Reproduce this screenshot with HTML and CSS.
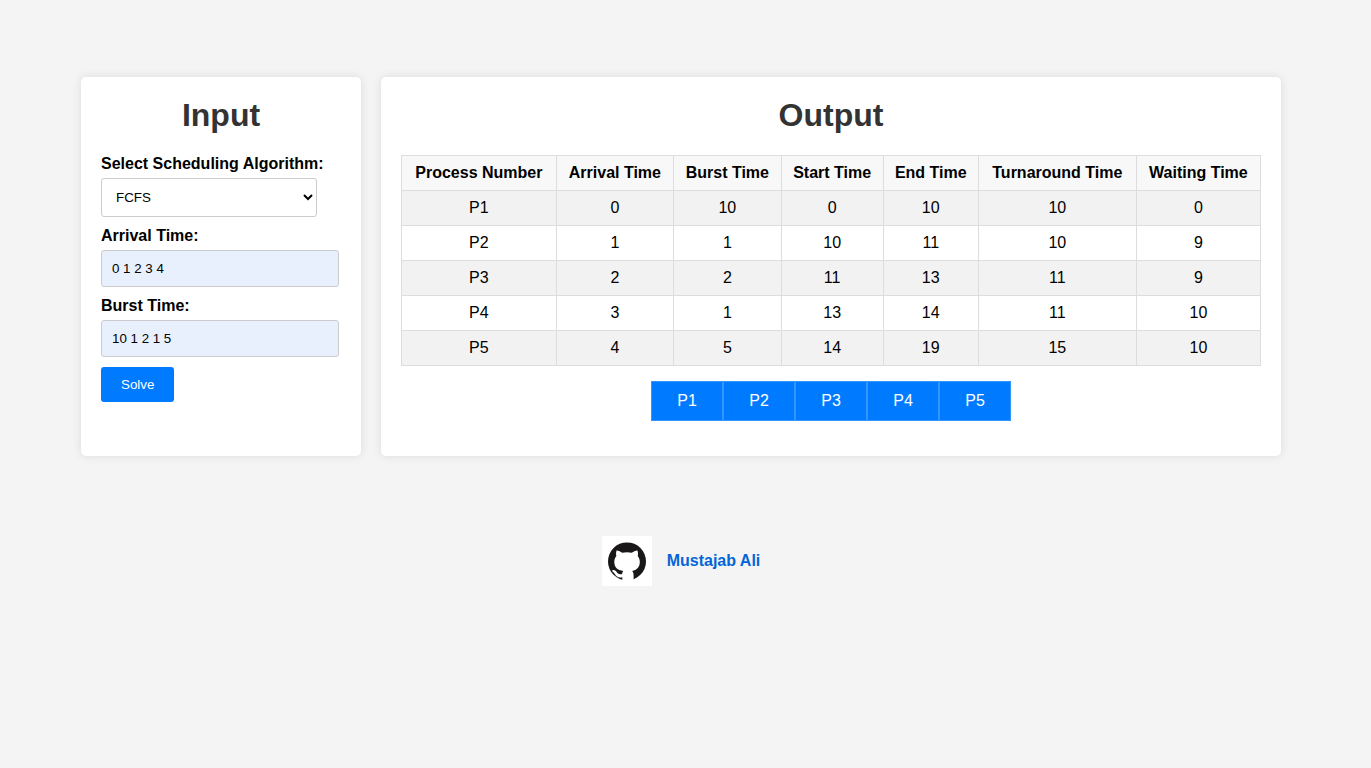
FILE: index.html
```html
<!DOCTYPE html>
<html lang="en">
<head>
<meta charset="utf-8">
<meta name="viewport" content="width=device-width, initial-scale=1">
<title>CPU Scheduling Solver</title>
<link rel="stylesheet" href="styles.css">
</head>
<body>
<main class="container">
  <section class="card">
    <h1 class="card-title">Input</h1>
    <form class="input-form">
      <label class="field-label" for="algorithm">Select Scheduling Algorithm:</label>
      <select class="field-select" id="algorithm">
        <option selected>FCFS</option>
        <option>SJF</option>
        <option>SRTF</option>
        <option>Round Robin</option>
      </select>
      <label class="field-label" for="arrival">Arrival Time:</label>
      <input class="field-input" id="arrival" type="text" value="0 1 2 3 4">
      <label class="field-label" for="burst">Burst Time:</label>
      <input class="field-input" id="burst" type="text" value="10 1 2 1 5">
      <button class="solve-button" type="button">Solve</button>
    </form>
  </section>
  <section class="card">
    <h1 class="card-title">Output</h1>
    <table class="results">
      <thead>
        <tr><th>Process Number</th><th>Arrival Time</th><th>Burst Time</th><th>Start Time</th><th>End Time</th><th>Turnaround Time</th><th>Waiting Time</th></tr>
      </thead>
      <tbody>
        <tr><td>P1</td><td>0</td><td>10</td><td>0</td><td>10</td><td>10</td><td>0</td></tr>
        <tr><td>P2</td><td>1</td><td>1</td><td>10</td><td>11</td><td>10</td><td>9</td></tr>
        <tr><td>P3</td><td>2</td><td>2</td><td>11</td><td>13</td><td>11</td><td>9</td></tr>
        <tr><td>P4</td><td>3</td><td>1</td><td>13</td><td>14</td><td>11</td><td>10</td></tr>
        <tr><td>P5</td><td>4</td><td>5</td><td>14</td><td>19</td><td>15</td><td>10</td></tr>
      </tbody>
    </table>
    <div class="gantt">
      <div class="gantt-block">P1</div>
      <div class="gantt-block">P2</div>
      <div class="gantt-block">P3</div>
      <div class="gantt-block">P4</div>
      <div class="gantt-block">P5</div>
    </div>
  </section>
</main>
<footer class="footer">
  <svg class="footer-logo" viewBox="0 0 50 50" aria-hidden="true">
    <rect width="50" height="50" fill="#fff"/>
    <circle cx="25" cy="25.4" r="19" fill="#191717"/>
    <path fill="#fff" d="M14.6 14.6c1.9-.1 3.9 1 5.6 2.2 3.1-.9 6.5-.9 9.6 0 1.7-1.2 3.7-2.3 5.6-2.2.8 1.9.8 3.9.3 5.4 1.4 1.6 2.1 3.5 2.1 5.8 0 5.5-2.9 8.3-7.7 9.2 1 1 1.5 2.4 1.5 4.6V46H20.3v-4.8c-3.8.8-6-.5-7.3-3-.6-1.2-1.4-2-2.4-2.7-1-.8-.4-1.6.8-1.5 1.7.1 2.7 1.2 3.6 2.6 1.2 1.7 2.8 2 5.1 1.4.2-1.4.6-2.3 1.3-3-5.9-.8-9.1-3.6-9.1-9.2 0-2.3.7-4.2 2.1-5.8-.5-1.5-.5-3.5.2-5.4z"/>
  </svg>
  <a class="footer-link" href="#">Mustajab Ali</a>
</footer>
</body>
</html>
```
FILE: styles.css
```css
* {
  box-sizing: border-box;
}

body {
  margin: 0;
  padding: 77px 9px 0 0;
  background: #f4f4f4;
  color: #000;
  font-family: "Liberation Sans", Arial, sans-serif;
  font-size: 16px;
}

.container {
  display: grid;
  grid-template-columns: 280px 1fr;
  gap: 20px;
  max-width: 1200px;
  margin: 0 auto;
}

.card {
  padding: 20px;
  background: #fff;
  border-radius: 5px;
  box-shadow: 0 0 10px rgba(0, 0, 0, 0.1);
}

.card-title {
  margin: 0 0 21px;
  color: #333;
  font-size: 32px;
  line-height: 37px;
  text-align: center;
}

.field-label {
  display: block;
  margin-bottom: 5px;
  font-weight: bold;
  line-height: 18px;
}

.field-select,
.field-input {
  display: block;
  margin-bottom: 10px;
  padding: 10px;
  border: 1px solid #ccc;
  border-radius: 3px;
  color: #000;
  font-family: inherit;
}

.field-select {
  width: 90%;
  height: 39px;
  background: #fff;
}

.field-input {
  width: 99%;
  height: 37px;
  background: #e8f0fe;
}

.solve-button {
  height: 35px;
  padding: 10px 20px;
  border: 0;
  border-radius: 3px;
  background: #007bff;
  color: #fff;
  font-family: inherit;
  cursor: pointer;
}

.results {
  width: 100%;
  border-collapse: collapse;
}

.results th,
.results td {
  padding: 8px;
  border: 1px solid #ddd;
  line-height: 18px;
  text-align: center;
}

.results th {
  background: #f8f8f8;
}

.results tbody tr:nth-child(odd) {
  background: #f2f2f2;
}

.gantt {
  display: flex;
  justify-content: center;
  margin: 15px 0;
}

.gantt-block {
  min-width: 72px;
  padding: 10px;
  border: 1px solid #3395ff;
  background: #007bff;
  color: #fff;
  line-height: 18px;
  text-align: center;
}

.footer {
  display: flex;
  align-items: center;
  justify-content: center;
  gap: 15px;
  margin-top: 80px;
}

.footer-logo {
  width: 50px;
  height: 50px;
}

.footer-link {
  color: #0366d6;
  font-weight: bold;
  text-decoration: none;
}
```
